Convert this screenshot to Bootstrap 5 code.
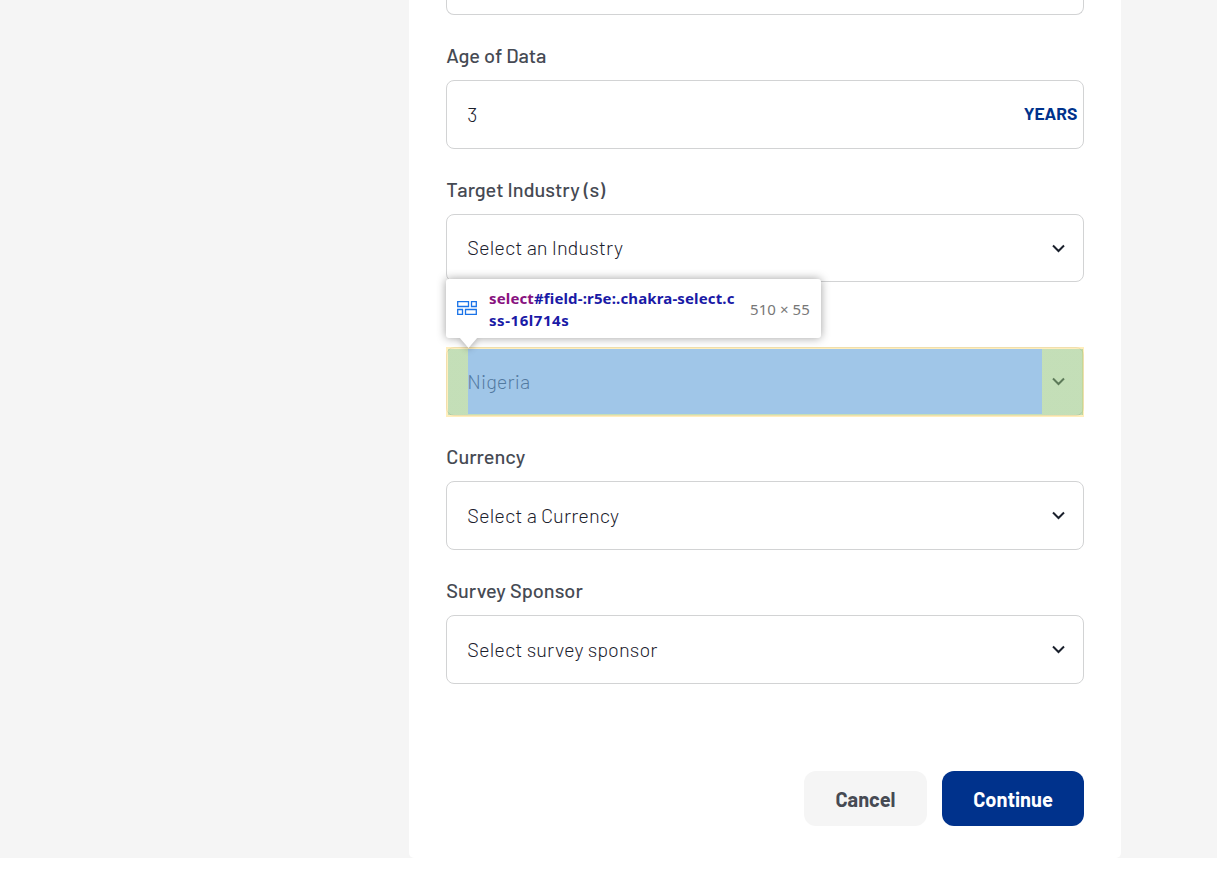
<!DOCTYPE html>
<html lang="en">
<head>
<meta charset="utf-8">
<meta name="viewport" content="width=device-width, initial-scale=1">
<title>Survey details</title>
<link href="https://cdn.jsdelivr.net/npm/bootstrap@5.3.0/dist/css/bootstrap.min.css" rel="stylesheet">
<style>
  body { font-family: Barlow, Roboto, sans-serif; background: #fff; overflow: hidden; }
  .page-area { width: 1217px; height: 858px; background: #f5f5f5; padding-left: 409px; }
  .form-panel { width: 712px; height: 858px; padding: 0 37px; border-radius: 0 0 5px 5px; }
  .field-end { height: 14.8px; border: 1px solid #d2d3d4; border-top: 0; border-radius: 0 0 8px 8px; }
  .field-label { height: 65px; padding-top: 25.2px; padding-left: .25px; line-height: 30px; font-size: 20px; font-weight: 500; color: #464a53; margin: 0; display: block; white-space: nowrap; }
  .field-box { height: 68.75px; }
  .field-box .form-control, .field-box .form-select { height: 100%; border: 1px solid #d2d3d4; border-radius: 8px; padding: 0 20.3px; font-size: 20px; font-weight: 300; color: #1a202c; background: #fff; }
  .field-box .form-select { padding-bottom: 1.2px; letter-spacing: .07px; }
  .chevron { right: 19px; top: 50%; margin-top: -4.3px; width: 13px; height: 9px; }
  .unit { right: 6.5px; top: 18.2px; line-height: 30px; font-size: 17.5px; font-weight: 700; color: #00328c; }
  .hl-border { inset: 0 0 -.7px; border: 2px solid rgba(255,229,153,.66); }
  .hl-pad { inset: 1.7px 1px .8px 2px; background: linear-gradient(rgba(147,196,125,.55),rgba(147,196,125,.55)) left/20px 100% no-repeat, linear-gradient(rgba(147,196,125,.55),rgba(147,196,125,.55)) right/41px 100% no-repeat; }
  .hl-content { left: 22px; right: 42px; top: 1.7px; bottom: .8px; background: rgba(111,168,220,.66); border-bottom: 1px solid rgba(147,196,125,.55); background-clip: padding-box; }
  .tip { left: 0; top: -68.3px; width: 375px; height: 59px; background: #fff; border-radius: 3px; box-shadow: 0 0 10px rgba(0,0,0,.38); z-index: 5; font-family: "Noto Sans", sans-serif; padding: 0 11px; }
  .tip-icon { margin-top: -1.5px; }
  .tip-arrow { left: 13px; top: 58px; width: 19px; height: 11px; filter: drop-shadow(0 2px 3px rgba(0,0,0,.3)); clip-path: inset(1px -8px -8px -8px); }
  .tip-name { font-size: 15px; line-height: 22px; font-weight: 700; color: #1a1aa6; margin-left: 12px; width: 261px; white-space: nowrap; letter-spacing: .14px; padding-top: 1px; }
  .tip-name .tag { color: #881280; }
  .tip-name .tip-line2 { letter-spacing: .55px; }
  .tip-size { font-size: 15px; color: #777; white-space: nowrap; padding-top: .5px; letter-spacing: .07px; }
  .actions { margin-top: 87.2px; gap: 15px; }
  .actions .btn { height: 55px; border: 0; border-radius: 12px; padding: 2px 0 0; font-size: 20px; font-weight: 700; }
  .btn-cancel, .btn-cancel:hover { width: 123px; background: #f5f5f5; color: #464a53; }
  .btn-continue, .btn-continue:hover { width: 142px; background: #00328c; color: #fff; }
</style>
</head>
<body>
<main class="page-area">
  <form class="form-panel bg-white">
    <div class="field-end"></div>
    <label class="field-label" for="age">Age of Data</label>
    <div class="field-box position-relative">
      <input id="age" class="form-control" value="3">
      <span class="unit position-absolute">YEARS</span>
    </div>
    <label class="field-label" for="industry">Target Industry (s)</label>
    <div class="field-box position-relative">
      <select id="industry" class="form-select"><option>Select an Industry</option></select>
      <svg class="chevron position-absolute" viewBox="0 0 13 9" fill="none" stroke="#1a202c" stroke-width="2"><path d="M1 1.5 6.5 7 12 1.5"/></svg>
    </div>
    <div class="field-label">&nbsp;</div>
    <div class="field-box position-relative">
      <select class="form-select"><option>Nigeria</option></select>
      <svg class="chevron position-absolute" viewBox="0 0 13 9" fill="none" stroke="#1a202c" stroke-width="2"><path d="M1 1.5 6.5 7 12 1.5"/></svg>
      <div class="hl-border position-absolute"></div>
      <div class="hl-pad position-absolute"></div>
      <div class="hl-content position-absolute"></div>
      <div class="tip position-absolute d-flex align-items-center">
        <svg class="tip-icon" width="20" height="14" viewBox="0 0 20 14" fill="none" stroke="#1a73e8" stroke-width="1.3"><path d="M.7.7h10.8v4.8H.7zM14.5.7h4.8v4.8h-4.8zM.7 8.5h4.8v4.8H.7zM8.5 8.5h10.8v4.8H8.5z"/></svg>
        <div class="tip-name"><div><span class="tag">select</span>#field-:r5e:.chakra-select.c</div><div class="tip-line2">ss-16l714s</div></div>
        <div class="tip-size">510 × 55</div>
        <svg class="tip-arrow position-absolute" viewBox="0 0 19 11"><path d="M0 0h19L9.5 11z" fill="#fff"/></svg>
      </div>
    </div>
    <label class="field-label" for="currency">Currency</label>
    <div class="field-box position-relative">
      <select id="currency" class="form-select"><option>Select a Currency</option></select>
      <svg class="chevron position-absolute" viewBox="0 0 13 9" fill="none" stroke="#1a202c" stroke-width="2"><path d="M1 1.5 6.5 7 12 1.5"/></svg>
    </div>
    <label class="field-label" for="sponsor">Survey Sponsor</label>
    <div class="field-box position-relative">
      <select id="sponsor" class="form-select"><option>Select survey sponsor</option></select>
      <svg class="chevron position-absolute" viewBox="0 0 13 9" fill="none" stroke="#1a202c" stroke-width="2"><path d="M1 1.5 6.5 7 12 1.5"/></svg>
    </div>
    <div class="actions d-flex justify-content-end">
      <button type="button" class="btn btn-cancel">Cancel</button>
      <button type="button" class="btn btn-continue">Continue</button>
    </div>
  </form>
</main>
<script src="https://cdn.jsdelivr.net/npm/bootstrap@5.3.0/dist/js/bootstrap.bundle.min.js"></script>
</body>
</html>
